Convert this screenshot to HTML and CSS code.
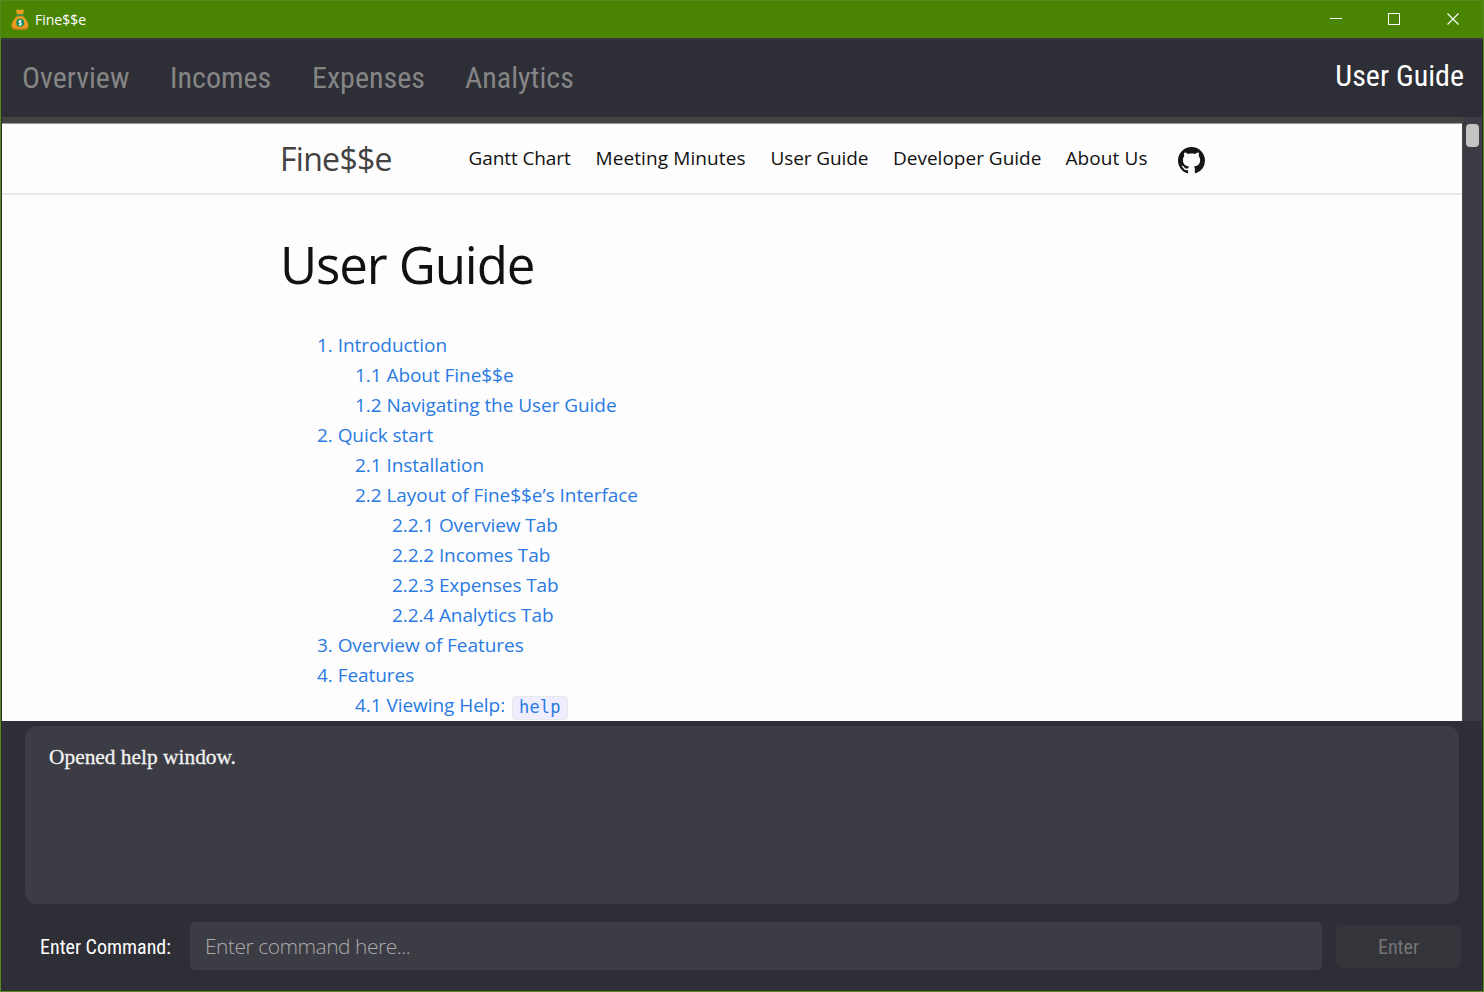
FILE: index.html
```
<!DOCTYPE html>
<html lang="en">
<head>
<meta charset="utf-8">
<title>Fine$$e</title>
<link rel="stylesheet" href="styles.css">
</head>
<body>
<div class="window">
  <header class="titlebar">
    <svg class="bag" width="18" height="21" viewBox="0 0 18 21">
      <path d="M5 1 Q7 0 9 1 Q11 0 13 1 L12 5.5 H6 Z" fill="#e99b20"/>
      <path d="M6 7 H12 C15 10 18 14 17.3 18 Q17 20.4 14 20.4 H4 Q1 20.4 .7 18 C0 14 3 10 6 7Z" fill="#e99b20"/>
      <path d="M1 18 Q9 21 17 18 Q16.6 20.4 14 20.4 H4 Q1.4 20.4 1 18Z" fill="#c87d14"/>
      <rect x="5" y="5.4" width="8" height="1.8" rx=".8" fill="#3d8b4f"/>
      <circle cx="9.2" cy="13.8" r="4" fill="#168a62"/>
      <path d="M10.6 12.2 Q9.2 11 8 12.1 Q7.4 13.4 9.2 13.8 Q11.2 14.3 10.3 15.5 Q9 16.5 7.7 15.4 M9.2 10.9 V16.8" fill="none" stroke="#fff" stroke-width="1"/>
    </svg>
    <span class="app-name">Fine$$e</span>
    <svg class="controls" width="130" height="14" viewBox="0 0 130 14" fill="none" stroke="#fff">
      <path d="M0 6.5 H12"/>
      <rect x="58.500" y="1.500" width="11" height="11"/>
      <path d="M117.500 1.500 L128.500 12.500 M128.500 1.500 L117.500 12.500" stroke-width="1.100"/>
    </svg>
  </header>
  <nav class="tabs">
    <span class="tab t1">Overview</span>
    <span class="tab t2">Incomes</span>
    <span class="tab t3">Expenses</span>
    <span class="tab t4">Analytics</span>
    <span class="tab active">User Guide</span>
  </nav>
  <main class="browser">
    <div class="page">
      <div class="site-header">
        <span class="brand">Fine$$e</span>
        <span class="link l1">Gantt Chart</span>
        <span class="link l2">Meeting Minutes</span>
        <span class="link l3">User Guide</span>
        <span class="link l4">Developer Guide</span>
        <span class="link l5">About Us</span>
        <svg class="github" width="27" height="27" viewBox="0 0 16 16"><path fill="#151515" d="M8 0C3.580 0 0 3.580 0 8c0 3.540 2.290 6.530 5.470 7.590.4.070.55-.17.55-.38 0-.19-.01-.82-.01-1.490-2.010.37-2.530-.49-2.690-.94-.09-.23-.48-.94-.82-1.130-.28-.15-.68-.52-.01-.53.63-.01 1.080.58 1.230.82.72 1.210 1.870.87 2.330.66.07-.52.28-.87.51-1.070-1.780-.2-3.640-.89-3.640-3.950 0-.87.31-1.590.82-2.150-.08-.2-.36-1.020.08-2.120 0 0 .67-.21 2.200.82.64-.18 1.320-.27 2-.27s1.360.09 2 .27c1.530-1.040 2.200-.82 2.200-.82.44 1.100.16 1.920.08 2.120.51.56.82 1.270.82 2.150 0 3.070-1.870 3.750-3.650 3.950.29.25.54.73.54 1.480 0 1.070-.01 1.930-.01 2.200 0 .21.15.46.55.38A8.010 8.010 0 0 0 16 8c0-4.420-3.580-8-8-8z"/></svg>
      </div>
      <h1>User Guide</h1>
      <div class="toc">
        <a>1. Introduction</a>
        <a class="sub">1.1 About Fine$$e</a>
        <a class="sub">1.2 Navigating the User Guide</a>
        <a>2. Quick start</a>
        <a class="sub">2.1 Installation</a>
        <a class="sub">2.2 Layout of Fine$$e’s Interface</a>
        <a class="subsub">2.2.1 Overview Tab</a>
        <a class="subsub">2.2.2 Incomes Tab</a>
        <a class="subsub">2.2.3 Expenses Tab</a>
        <a class="subsub">2.2.4 Analytics Tab</a>
        <a>3. Overview of Features</a>
        <a>4. Features</a>
        <a class="sub">4.1 Viewing Help: <code>help</code></a>
      </div>
    </div>
    <div class="scrollbar"><div class="thumb"></div></div>
  </main>
  <section class="result"><span class="result-text">Opened help window.</span></section>
  <footer class="command">
    <span class="label">Enter Command:</span>
    <div class="field"><span class="placeholder">Enter command here...</span></div>
    <div class="enter"><span class="enter-text">Enter</span></div>
  </footer>
</div>
</body>
</html>
```
FILE: styles.css
```
* { box-sizing: border-box; }
body { margin: 0; background: #2e2e36; }
.window { width: 1484px; height: 992px; border: 1px solid #558b1c; display: flex; flex-direction: column; background: #2e2e36; overflow: hidden; white-space: nowrap; font-family: "Open Sans", sans-serif; }
.titlebar { height: 37px; flex: none; background: #4a8405; display: flex; align-items: flex-start; padding: 8px 23px 0 10px; }
.app-name { margin-left: 6px; color: #fff; font-size: 14px; line-height: 22px; }
.controls { margin: 3px 0 0 auto; }
.tabs { height: 79px; flex: none; display: flex; padding-left: 21px; padding-right: 19px; border-top: 2px solid #36363b; font: 30px/36px "Roboto Condensed", Roboto, sans-serif; font-stretch: 75%; color: #858585; }
.tab { padding-top: 20px; flex: none; }
.t1 { width: 148px; }
.t2 { width: 142px; }
.t3 { width: 153px; }
.active { margin-left: auto; padding-top: 18px; color: #fff; }
.browser { height: 604px; flex: none; display: flex; padding-left: 1px; }
.page { width: 1460px; flex: none; height: 604px; border-top: 6px solid #444; background: #fdfdfd; overflow: hidden; }
.site-header { height: 72px; border-top: 1px solid #999; border-bottom: 2px solid #e9e9e9; padding-left: 278px; display: flex; }
.brand { width: 188.500px; color: #424242; font-size: 32px; line-height: 70px; letter-spacing: -0.7px; }
.link { flex: none; color: #111; font-size: 19px; line-height: 68px; }
.l1 { width: 127px; letter-spacing: -0.1px; }
.l2 { width: 175px; letter-spacing: 0.1px; }
.l3 { width: 122.500px; letter-spacing: -0.1px; }
.l4 { width: 172.500px; }
.l5 { width: 112px; letter-spacing: 0.1px; }
.github { margin-top: 23px; }
h1 { margin: 33px 0 0 278px; color: #111; font-weight: 400; font-size: 51px; line-height: 72px; letter-spacing: -1.1px; }
.toc { margin-top: 30px; padding-left: 315px; display: flex; flex-direction: column; color: #2a7ae2; font-size: 19px; line-height: 30px; letter-spacing: -0.05px; }
.sub { padding-left: 38px; }
.subsub { padding-left: 75px; letter-spacing: -0.1px; }
code { display: inline-block; height: 24px; margin-left: 2px; padding: 0 6px; border: 1px solid #e8e8e8; border-radius: 3px; background: #eef; font: 17px/21px "DejaVu Sans Mono", monospace; letter-spacing: 0.2px; vertical-align: -1px; }
.scrollbar { flex: 1; margin-right: 1px; background: #3c3c44; padding: 7px 3px 0 3px; border-left: 1px solid #46464c; }
.thumb { height: 23px; width: 13px; background: #c4c4c4; border-radius: 4px; }
.result { height: 178px; flex: none; margin: 5px 24px 0; border-radius: 12px; background: #3c3c44; padding: 17px 24px; font: 21.400px/28px "Liberation Serif", serif; color: #f2f2f2; -webkit-text-stroke: 0.3px #f2f2f2; }
.command { height: 48px; flex: none; margin-top: 18px; padding-left: 39px; display: flex; align-items: center; font: 20px/28px "Roboto Condensed", Roboto, sans-serif; font-stretch: 75%; color: #fff; }
.label { width: 150px; padding-top: 2px; }
.field { width: 1132px; height: 48px; border-radius: 5px; background: #3c3c44; padding: 0 15px; }
.placeholder { font: 300 21px/48px "Open Sans", sans-serif; letter-spacing: -0.5px; color: #aaa; }
.enter { margin-left: 14px; width: 125px; height: 43px; border-radius: 6px; background: #34343b; text-align: center; line-height: 45px; color: #747476; }
```
